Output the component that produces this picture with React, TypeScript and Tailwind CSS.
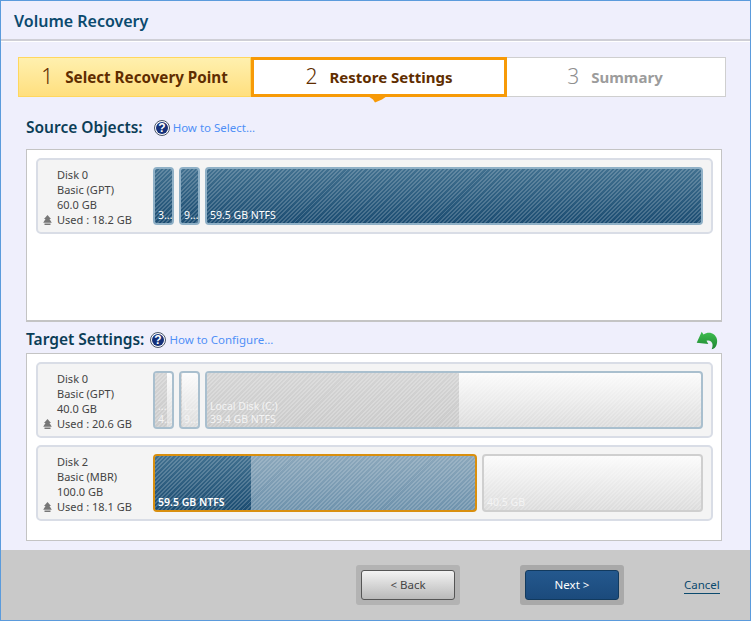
import React from 'react';

const hatchDark =
  'bg-[repeating-linear-gradient(135deg,rgba(255,255,255,0.18)_0px,rgba(255,255,255,0.18)_1.4px,transparent_1.4px,transparent_3px),linear-gradient(180deg,#41708f_0%,#1c4d72_100%)]';
const hatchLight =
  'bg-[repeating-linear-gradient(135deg,rgba(255,255,255,0.16)_0px,rgba(255,255,255,0.16)_1.4px,transparent_1.4px,transparent_3px),linear-gradient(180deg,#8ba7bb_0%,#6f93ad_100%)]';
const hatchGrey =
  'bg-[repeating-linear-gradient(135deg,rgba(255,255,255,0.22)_0px,rgba(255,255,255,0.22)_1.4px,transparent_1.4px,transparent_3px),linear-gradient(180deg,#d4d4d4_0%,#cbcbcb_100%)]';
const hatchEmpty =
  'bg-[repeating-linear-gradient(135deg,rgba(255,255,255,0.2)_0px,rgba(255,255,255,0.2)_1.4px,transparent_1.4px,transparent_3px),linear-gradient(180deg,#fbfbfb_0%,#dcdcdc_100%)]';

function HelpIcon() {
  return (
    <svg width="16" height="16" viewBox="0 0 16 16" className="shrink-0">
      <circle cx="8" cy="8" r="7.5" fill="#fff" stroke="#4a5568" />
      <circle cx="8" cy="8" r="6" fill="#15307a" />
      <text x="8" y="12.2" textAnchor="middle" fontSize="12" fontWeight="700" fill="#fff" fontFamily="Liberation Sans, sans-serif">?</text>
    </svg>
  );
}

function UndoIcon() {
  return (
    <svg width="22" height="19" viewBox="0 0 22 19">
      <defs>
        <linearGradient id="undo" x1="0" y1="0" x2="0" y2="1">
          <stop offset="0" stopColor="#3fbf50" />
          <stop offset="1" stopColor="#1d8430" />
        </linearGradient>
      </defs>
      <path
        d="M0.7 11.7 L5.7 0.7 L7.5 3.5 C11 1 15 1 18 3.5 C21 6 22 10 20.5 14 C19.5 16.5 18 18 15.7 18.3 C17 15 17 12 15 10.5 C13.5 9.3 12 9.3 10.5 9.8 L12.3 13 Z"
        fill="url(#undo)"
      />
    </svg>
  );
}

function DiskInfo({ lines }: { lines: string[] }) {
  return (
    <div className="relative w-[115px] shrink-0 pl-[19px] pt-[2px] text-[11px] leading-[15px] text-[#444]">
      {lines.map((l) => (
        <div key={l} className="whitespace-nowrap">{l}</div>
      ))}
      <svg width="9" height="10" viewBox="0 0 9 10" className="absolute left-[5px] bottom-[2px]">
        <path d="M4.5 0 L8 4 L6.5 4 L8.8 7.8 L0.2 7.8 L2.5 4 L1 4 Z M1.5 8.4 H7.5 V10 H1.5 Z" fill="#777" />
      </svg>
    </div>
  );
}

type PartProps = {
  width: string;
  fill: string;
  rest?: string;
  used?: number;
  border: string;
  text: string;
  labels: string[];
};

function Partition({ width, fill, rest, used, border, text, labels }: PartProps) {
  return (
    <div className={`relative h-full overflow-hidden rounded-[4px] ${width} ${border} ${rest ?? fill}`}>
      {used !== undefined && <div className={`absolute inset-y-0 left-0 ${fill}`} style={{ width: `${used}%` }} />}
      <div className={`absolute bottom-[1px] left-[3px] right-0 overflow-hidden text-[10.5px] leading-[13px] ${text}`}>
        {labels.map((l) => (
          <div key={l} className="whitespace-nowrap">{l}</div>
        ))}
      </div>
    </div>
  );
}

function DiskRow({ lines, children }: { lines: string[]; children: React.ReactNode }) {
  return (
    <div className="flex h-[76px] items-center rounded-[5px] border-2 border-[#d9dde6] bg-[#f4f4f4]">
      <DiskInfo lines={lines} />
      <div className="flex h-[58px] gap-[5px]">{children}</div>
    </div>
  );
}

export default function App() {
  const darkBorder = 'border-2 border-[#8fb0c6]';
  const greyBorder = 'border-2 border-[#a9bfce]';

  return (
    <div className="flex h-[621px] w-[751px] flex-col overflow-hidden border border-[#5b9bdc] bg-[#efeffc] font-['Noto_Sans',sans-serif]">
      <div className="h-[40px] shrink-0 border-b-2 border-b-[#cfcfd6] pl-[13px] pt-[9px] text-[16px] leading-[22px] font-semibold text-[#0b4a6e]">
        Volume Recovery
      </div>
      <div className="h-px shrink-0 bg-white" />

      <div className="mt-[15px] ml-[17px] flex h-[40px] w-[708px] shrink-0">
        <div className="flex w-[233px] items-center justify-center gap-[12px] border border-[#ffd75e] bg-gradient-to-b from-[#fff0ae] to-[#ffdf7e]">
          <span className="text-[21px] font-light text-[#5f2d00]">1</span>
          <span className="text-[15.2px] font-bold text-[#5f2d00]">Select Recovery Point</span>
        </div>
        <div className="relative flex w-[256px] items-center justify-center gap-[12px] border-[3px] border-[#f79a07] bg-white">
          <span className="text-[21px] font-light text-[#5f2d00]">2</span>
          <span className="text-[15px] font-bold text-[#5f2d00]">Restore Settings</span>
          <svg width="19" height="7" viewBox="0 0 19 7" className="absolute bottom-[-9px] left-[114px]">
            <path d="M0 0 H19 L14 3.5 L7 6.5 L5 3.5 Z" fill="#f79a07" />
          </svg>
        </div>
        <div className="flex flex-1 items-center justify-center gap-[12px] border border-l-0 border-[#cfcfcf] bg-white pr-[2px]">
          <span className="text-[21px] font-light text-[#8f8f8f]">3</span>
          <span className="text-[15px] font-bold text-[#9c9c9c]">Summary</span>
        </div>
      </div>

      <div className="ml-[25px] mt-[19px] flex h-[24px] shrink-0 items-center">
        <span className="text-[15.5px] font-semibold text-[#0b3d57]">Source Objects:</span>
        <span className="ml-[11px]"><HelpIcon /></span>
        <span className="ml-[3px] text-[11.5px] text-[#4f8ff7]">How to Select...</span>
      </div>

      <div className="ml-[25px] mt-[9px] h-[173px] w-[696px] shrink-0 border border-b-2 border-[#c4c4c4] bg-white pl-[9px] pr-[8px] pt-[8px]">
        <DiskRow lines={['Disk 0', 'Basic (GPT)', '60.0 GB', 'Used : 18.2 GB']}>
          <Partition width="w-[21px]" fill={hatchDark} border={darkBorder} text="text-white" labels={['3...']} />
          <Partition width="w-[21px]" fill={hatchDark} border={darkBorder} text="text-white" labels={['9...']} />
          <Partition width="w-[498px]" fill={hatchDark} border={darkBorder} text="text-white" labels={['59.5 GB NTFS']} />
        </DiskRow>
      </div>

      <div className="ml-[25px] mt-[6px] flex h-[24px] w-[692px] shrink-0 items-center">
        <span className="text-[15.5px] font-semibold text-[#0b3d57]">Target Settings:</span>
        <span className="ml-[6px]"><HelpIcon /></span>
        <span className="ml-[3px] text-[11.5px] text-[#4f8ff7]">How to Configure...</span>
        <span className="ml-auto"><UndoIcon /></span>
      </div>

      <div className="ml-[25px] mt-px h-[188px] w-[696px] shrink-0 border border-[#c4c4c4] bg-white pl-[9px] pr-[8px] pt-[8px]">
        <div className="flex flex-col gap-[7px]">
          <DiskRow lines={['Disk 0', 'Basic (GPT)', '40.0 GB', 'Used : 20.6 GB']}>
            <Partition width="w-[21px]" fill={hatchGrey} rest={hatchEmpty} used={70} border={greyBorder} text="text-[#f4f4f4]" labels={['...', '4...']} />
            <Partition width="w-[21px]" fill={hatchGrey} rest={hatchEmpty} used={5} border={greyBorder} text="text-[#f4f4f4]" labels={['L...', '9...']} />
            <Partition width="w-[498px]" fill={hatchGrey} rest={hatchEmpty} used={51} border={greyBorder} text="text-[#f4f4f4]" labels={['Local Disk (C:)', '39.4 GB NTFS']} />
          </DiskRow>
          <DiskRow lines={['Disk 2', 'Basic (MBR)', '100.0 GB', 'Used : 18.1 GB']}>
            <Partition width="w-[324px]" fill={hatchDark} rest={hatchLight} used={30} border="border-2 border-[#d98f0e]" text="text-white font-semibold" labels={['59.5 GB NTFS']} />
            <Partition width="w-[221px]" fill={hatchEmpty} border="border-2 border-[#cfcfcf]" text="text-[#f4f4f4]" labels={['40.5 GB']} />
          </DiskRow>
        </div>
      </div>

      <div className="mt-[9px] flex flex-1 items-start bg-[#c9c9c9] pt-[15px]">
        <div className="ml-[355px] rounded-[3px] bg-[#b3b3b3] p-[5px]">
          <button className="h-[30px] w-[94px] rounded-[3px] border border-[#555] bg-gradient-to-b from-[#f3f3f3] to-[#b9b9b9] text-[11.5px] text-[#444]">
            &lt; Back
          </button>
        </div>
        <div className="ml-[60px] rounded-[3px] bg-[#a9a9a9] p-[5px]">
          <button className="h-[30px] w-[94px] rounded-[3px] border border-[#123a5e] bg-gradient-to-b from-[#24588e] to-[#1b4a7c] text-[11.5px] text-white">
            Next &gt;
          </button>
        </div>
        <a className="ml-[60px] mt-[11px] border-b border-[#0b4a6e] text-[11.5px] leading-[17px] text-[#0b4a6e]">Cancel</a>
      </div>
    </div>
  );
}
